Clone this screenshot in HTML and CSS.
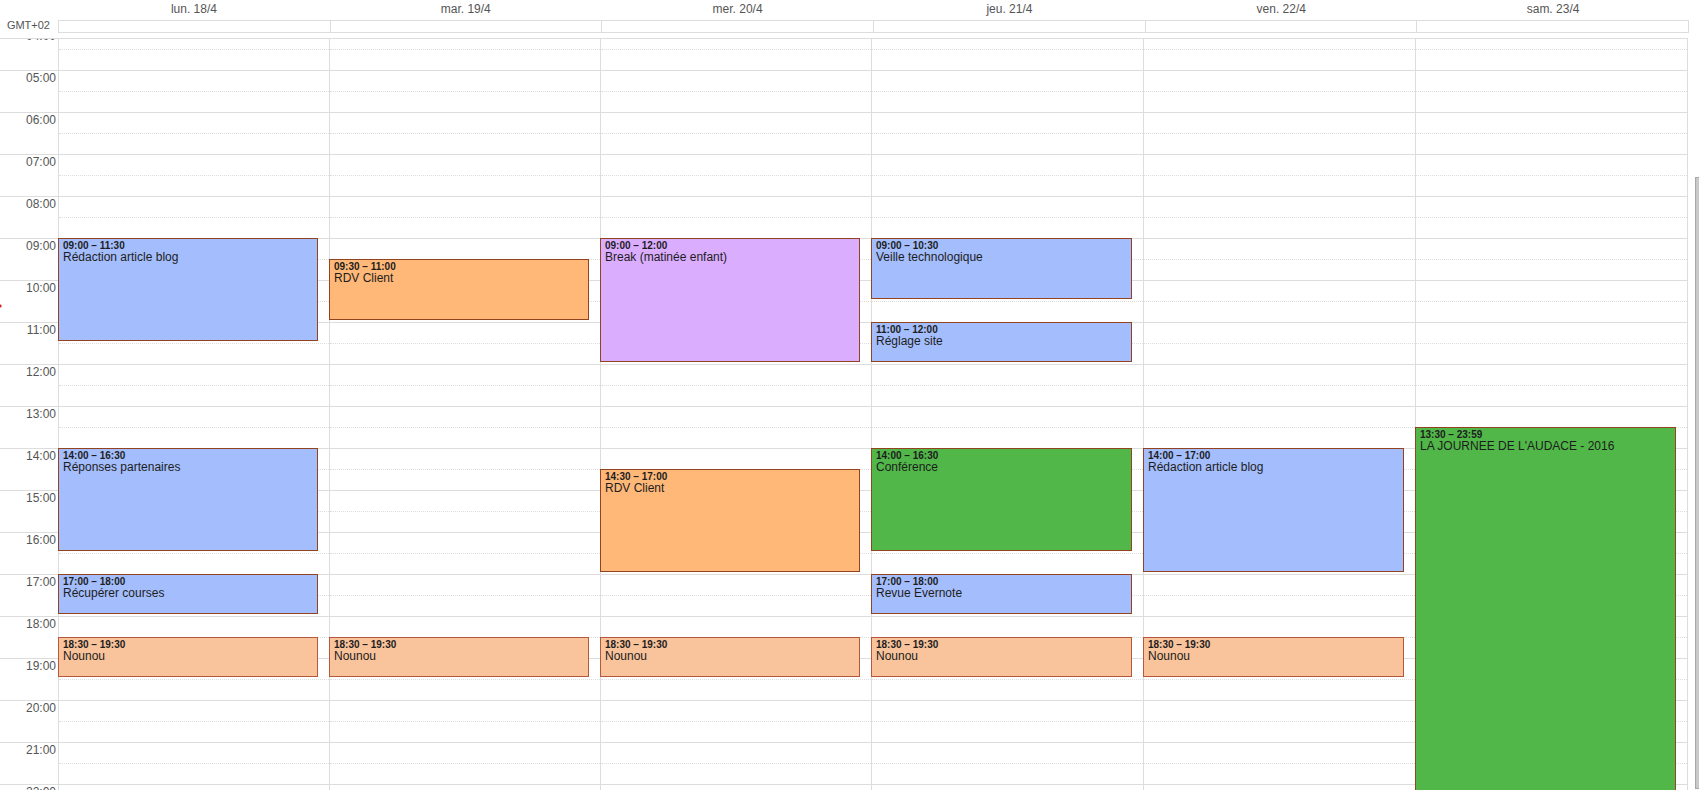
FILE: index.html
```
<!DOCTYPE html>
<html lang="fr">
<head>
  <meta charset="UTF-8">
  <title>Agenda - semaine du 18/4</title>
  <link rel="stylesheet" href="styles.css">
</head>
<body>
  <div class="calendar">
    <div class="header">
      <div class="timezone">GMT+02</div>
      <div class="days" id="dayNames"></div>
      <div class="all-day" id="allDay"></div>
    </div>
    <div class="viewport">
      <div class="scroller" id="scroller">
        <div class="hours" id="hours"></div>
        <div class="columns" id="columns"></div>
        <div class="now-marker"></div>
      </div>
      <div class="scroll-thumb"></div>
    </div>
  </div>

  <script src="calendar.js"></script>
</body>
</html>
```

FILE: styles.css
```
* {
  box-sizing: border-box;
}
body {
  margin: 0;
  background: #fff;
  color: #555;
  font-family: Arial, "Liberation Sans", sans-serif;
  font-size: 12px;
  line-height: 14px;
}
.calendar {
  display: flex;
  flex-direction: column;
  height: 100vh;
  overflow: hidden;
}

/* Header */
.header {
  display: grid;
  grid-template-columns: 58px 1fr;
  grid-template-rows: 20px 13px;
  padding: 0 10px 5px 0;
}
.days {
  grid-column: 2;
  display: flex;
  padding-top: 2px;
}
.day-name {
  flex: 1;
  text-align: center;
}
.timezone {
  grid-column: 1;
  grid-row: 2;
  padding-right: 8px;
  font-size: 11px;
  line-height: 10px;
  text-align: right;
}
.all-day {
  grid-column: 2;
  grid-row: 2;
  display: flex;
  border: 1px solid #ddd;
  border-left: none;
}
.all-day-cell {
  flex: 1;
  border-left: 1px solid #ddd;
}

/* Hour grid */
.viewport {
  position: relative;
  flex: 1;
  min-height: 0;
  border-top: 1px solid #ddd;
  margin-right: 11px;
}
.scroller {
  position: relative;
  display: flex;
  height: 100%;
  overflow: hidden;
}
.hours {
  width: 58px;
}
.hour {
  height: 42px;
  padding-right: 2px;
  border-top: 1px solid #ddd;
  text-align: right;
}
.columns {
  flex: 1;
  display: grid;
  grid-template-columns: repeat(3, 271fr) repeat(3, 272fr);
  height: 1008px;
  border-right: 1px solid #ddd;
}
.column {
  min-width: 0;
  display: grid;
  grid-template-columns: 100%;
  grid-template-rows: repeat(48, 21px);
  border-left: 1px solid #ddd;
}
.slot {
  grid-column: 1;
  border-top: 1px dotted #ddd;
}
.slot.full {
  border-top-style: solid;
}

/* Events */
.event {
  grid-column: 1;
  z-index: 1;
  margin: 0 11px 2px -1px;
  padding: 2px 4px;
  border: 1px solid #924420;
  color: #1d1d1d;
  overflow: hidden;
}
.event-time {
  font-size: 10px;
  font-weight: bold;
  line-height: 10px;
}
.event-title {
  line-height: 13px;
}
.event.blue {
  background: #a4bdfc;
}
.event.orange {
  background: #ffb878;
}
.event.purple {
  background: #dbadff;
}
.event.green {
  background: #51b749;
}
.event.peach {
  background: #f9c39c;
  border-color: #b5583c;
}

.now-marker {
  position: absolute;
  top: 444px;
  left: 0;
  border: 2px solid transparent;
  border-left-color: #d22;
  border-right: none;
}
.scroll-thumb {
  position: absolute;
  top: 138px;
  right: -11px;
  bottom: 1px;
  width: 4px;
  border: 1px solid #a8a8a8;
  border-right: none;
  background: #c9c9c9;
}
```

FILE: calendar.js
```
const HOUR_HEIGHT = 42;

const days = [
  {name: "lun. 18/4", events: [
    {start: "09:00", end: "11:30", title: "Rédaction article blog", color: "blue"},
    {start: "14:00", end: "16:30", title: "Réponses partenaires", color: "blue"},
    {start: "17:00", end: "18:00", title: "Récupérer courses", color: "blue"},
    {start: "18:30", end: "19:30", title: "Nounou", color: "peach"}
  ]},
  {name: "mar. 19/4", events: [
    {start: "09:30", end: "11:00", title: "RDV Client", color: "orange"},
    {start: "18:30", end: "19:30", title: "Nounou", color: "peach"}
  ]},
  {name: "mer. 20/4", events: [
    {start: "09:00", end: "12:00", title: "Break (matinée enfant)", color: "purple"},
    {start: "14:30", end: "17:00", title: "RDV Client", color: "orange"},
    {start: "18:30", end: "19:30", title: "Nounou", color: "peach"}
  ]},
  {name: "jeu. 21/4", events: [
    {start: "09:00", end: "10:30", title: "Veille technologique", color: "blue"},
    {start: "11:00", end: "12:00", title: "Réglage site", color: "blue"},
    {start: "14:00", end: "16:30", title: "Conférence", color: "green"},
    {start: "17:00", end: "18:00", title: "Revue Evernote", color: "blue"},
    {start: "18:30", end: "19:30", title: "Nounou", color: "peach"}
  ]},
  {name: "ven. 22/4", events: [
    {start: "14:00", end: "17:00", title: "Rédaction article blog", color: "blue"},
    {start: "18:30", end: "19:30", title: "Nounou", color: "peach"}
  ]},
  {name: "sam. 23/4", events: [
    {start: "13:30", end: "23:59", title: "LA JOURNEE DE L'AUDACE - 2016", color: "green"}
  ]}
];

function addDiv(parent, className, text) {
  const el = document.createElement("div");
  el.className = className;
  if (text) el.textContent = text;
  parent.appendChild(el);
  return el;
}

// Grid line of a time, two lines per hour
function rowOf(time) {
  const [h, m] = time.split(":").map(Number);
  return Math.round((h * 60 + m) / 30) + 1;
}

function renderHours() {
  const hours = document.getElementById("hours");
  for (let h = 0; h < 24; h++) {
    addDiv(hours, "hour", String(h).padStart(2, "0") + ":00");
  }
}

function renderDays() {
  days.forEach(day => {
    addDiv(document.getElementById("dayNames"), "day-name", day.name);
    addDiv(document.getElementById("allDay"), "all-day-cell");
    const column = addDiv(document.getElementById("columns"), "column");
    for (let i = 0; i < 48; i++) {
      const slot = addDiv(column, "slot" + (i % 2 === 0 ? " full" : ""));
      slot.style.gridRow = i + 1;
    }
    day.events.forEach(ev => {
      const el = addDiv(column, "event " + ev.color);
      el.style.gridRow = rowOf(ev.start) + " / " + rowOf(ev.end);
      addDiv(el, "event-time", ev.start + " – " + ev.end);
      addDiv(el, "event-title", ev.title);
    });
  });
}

renderHours();
renderDays();

// Open a little after 04:00
document.getElementById("scroller").scrollTop = 4 * HOUR_HEIGHT + 11;
```
